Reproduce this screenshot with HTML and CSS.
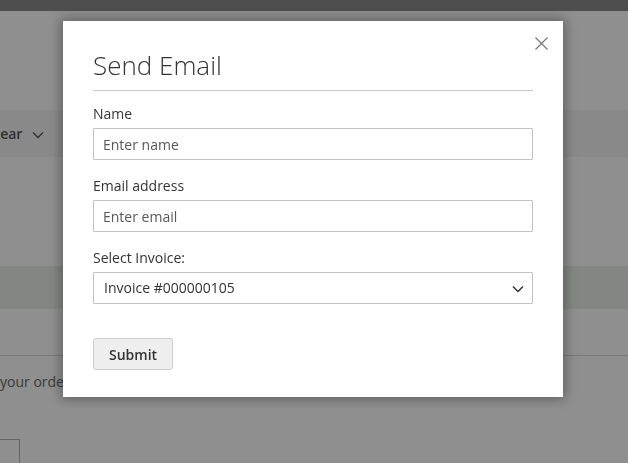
FILE: index.html
```html
<!DOCTYPE html>
<html lang="en">
<head>
  <meta charset="UTF-8">
  <title>Send Email</title>
  <link rel="stylesheet" href="styles.css">
</head>
<body>

<!-- page behind the modal -->
<div class="page">
  <div class="topbar"></div>
  <div class="page-head"></div>
  <nav class="navbar">
    <span class="nav-item">Gear
      <svg class="nav-caret" width="12" height="8" viewBox="0 0 12 8"><path d="M1 1.5l5 5 5-5" fill="none" stroke="#575757" stroke-width="1.4"/></svg>
    </span>
  </nav>
  <div class="message">Thank you for your purchase!</div>
  <div class="divider"></div>
  <p class="order-text">your order details are shown below.</p>
  <div class="qty-box"></div>
</div>

<div class="overlay">
  <div class="modal">
    <button class="modal-close" title="Close">
      <svg width="13" height="13" viewBox="0 0 13 13"><path d="M0.5 0.5l12 12M12.5 0.5l-12 12" fill="none" stroke="#7b7b7b" stroke-width="1.3"/></svg>
    </button>
    <header class="modal-header">
      <h1 class="modal-title">Send Email</h1>
    </header>
    <form class="modal-form">
      <div class="field">
        <label for="name">Name</label>
        <input type="text" id="name" placeholder="Enter name">
      </div>
      <div class="field">
        <label for="email">Email address</label>
        <input type="text" id="email" placeholder="Enter email">
      </div>
      <div class="field">
        <label for="invoice">Select Invoice:</label>
        <div class="select-wrap">
          <select id="invoice">
            <option>Invoice #000000105</option>
          </select>
          <svg class="select-caret" width="12" height="8" viewBox="0 0 12 8"><path d="M1 1.5l5 5 5-5" fill="none" stroke="#333" stroke-width="1.5"/></svg>
        </div>
      </div>
      <button type="button" class="btn-submit">Submit</button>
    </form>
  </div>
</div>

</body>
</html>
```

FILE: styles.css
```css
html, body {
  margin: 0;
  height: 100%;
  overflow: hidden;
}
body {
  font-family: "Open Sans", "Liberation Sans", Arial, sans-serif;
  font-size: 14px;
  color: #333;
  background: #fff;
}
.topbar {
  height: 11px;
  background: #8c8c8c;
}
.page-head {
  height: 99px;
}
.navbar {
  height: 47px;
  line-height: 47px;
  background: #f5f5f5;
}
.nav-item {
  display: inline-block;
  margin-left: -10px;
  font-weight: 600;
  color: #575757;
}
.nav-caret {
  margin-left: 6px;
  vertical-align: 0;
}
.message {
  margin-top: 109px;
  height: 43px;
  background: #eaf1e8;
  color: #eaf1e8;
  line-height: 43px;
  padding-left: 20px;
}
.divider {
  height: 46px;
  border-bottom: 1px solid #d6d6d6;
}
.order-text {
  margin: 16px 0 0;
  line-height: 20px;
  color: #6a6a6a;
}
.qty-box {
  margin-top: 47px;
  width: 19px;
  height: 40px;
  border: 1px solid #b4b4b4;
  border-left: none;
}

.overlay {
  position: fixed;
  top: 0;
  left: 0;
  right: 0;
  bottom: 0;
  background: rgba(0, 0, 0, .44);
}
.modal {
  position: relative;
  box-sizing: border-box;
  width: 500px;
  margin: 21px 0 0 63px;
  padding: 0 30px 27px;
  background: #fff;
  box-shadow: 0 0 12px 2px rgba(0, 0, 0, .35);
}
.modal-close {
  position: absolute;
  top: 16px;
  right: 15px;
  padding: 0;
  border: none;
  background: none;
  line-height: 0;
  cursor: pointer;
}
.modal-header {
  padding: 30px 0 10px;
  border-bottom: 1px solid #c6c6c6;
}
.modal-title {
  margin: 0;
  font-size: 26px;
  font-weight: 300;
  line-height: 29px;
  color: #333;
}
.modal-form {
  padding-top: 11px;
}
.field {
  margin-bottom: 14px;
}
.field label {
  display: block;
  line-height: 24px;
  margin-bottom: 2px;
}
.field input,
.field select {
  display: block;
  box-sizing: border-box;
  width: 100%;
  height: 32px;
  margin: 0;
  padding: 0 9px;
  border: 1px solid #c2c2c2;
  border-radius: 1px;
  background: #fff;
  font-family: inherit;
  font-size: 14px;
  color: #333;
}
.field input::placeholder {
  color: #575757;
}
.select-wrap {
  position: relative;
}
.field select {
  appearance: none;
  -webkit-appearance: none;
  padding: 0 25px 0 10px;
  line-height: 30px;
}
.select-caret {
  position: absolute;
  right: 9px;
  top: 13px;
  pointer-events: none;
}
.btn-submit {
  margin-top: 20px;
  height: 32px;
  padding: 0 15px;
  border: 1px solid #cdcdcd;
  border-radius: 3px;
  background: #eee;
  font-family: inherit;
  font-size: 14px;
  font-weight: 600;
  color: #333;
  cursor: pointer;
}
```
